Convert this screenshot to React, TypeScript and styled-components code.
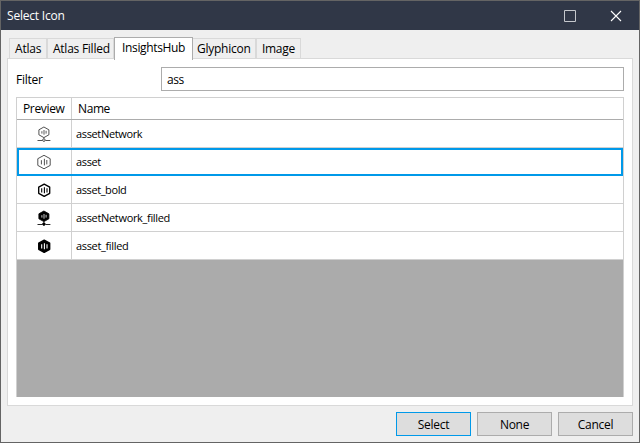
import React from 'react';
import styled, { createGlobalStyle, css } from 'styled-components';

const GlobalStyle = createGlobalStyle`
  * { box-sizing: border-box; }
  body { margin: 0; background: #efefef; }
`;

const Window = styled.div`
  width: 640px;
  height: 443px;
  display: flex;
  flex-direction: column;
  border: 1px solid #646464;
  background: #efefef;
  color: #000;
  font: 12px/16px 'Open Sans', 'Noto Sans', sans-serif;
  overflow: hidden;
`;

const TitleBar = styled.header`
  display: flex;
  flex: none;
  align-items: center;
  justify-content: space-between;
  height: 29px;
  padding-left: 6px;
  background: #303747;
  color: #fff;
`;

const WindowControls = styled.div`
  display: flex;
`;

const WindowButton = styled.button`
  display: flex;
  align-items: center;
  justify-content: center;
  width: 46px;
  height: 29px;
  padding: 0;
  border: 0;
  background: transparent;
  color: #fff;
`;

const Label = styled.span<{ $spacing?: number; $size?: number; $drop?: number }>`
  padding-top: ${({ $drop = 0 }) => $drop}px;
  font-size: ${({ $size = 12 }) => $size}px;
  letter-spacing: ${({ $spacing = 0 }) => $spacing}px;
  white-space: nowrap;
`;

const TabList = styled.nav`
  display: flex;
  flex: none;
  align-items: flex-end;
  height: 29px;
  padding-left: 8px;
`;

const Tab = styled.div<{ $width: number; $active?: boolean; $joined?: boolean }>`
  width: ${({ $width }) => $width}px;
  height: 21px;
  padding: 2px 0 0 5px;
  border: 1px solid #d9d9d9;
  ${({ $joined }) =>
    $joined &&
    css`
      padding-left: 4px;
      border-left: 0;
    `}
  ${({ $active }) =>
    $active &&
    css`
      position: relative;
      height: 23px;
      margin-bottom: -1px;
      padding: 2px 0 0 7px;
      border-color: #acacac;
      border-bottom: 0;
      background: #fff;
    `}
`;

const Panel = styled.main`
  display: flex;
  flex: none;
  flex-direction: column;
  width: 626px;
  height: 348px;
  margin: -1px 0 0 6px;
  padding: 8px;
  border: 1px solid #d9d9d9;
  background: #fff;
`;

const FilterRow = styled.label`
  display: grid;
  grid-template-columns: 145px 463px;
  align-items: center;
  height: 24px;
  margin-bottom: 6px;
`;

const FilterBox = styled.div`
  display: flex;
  align-items: center;
  height: 24px;
  padding-left: 5px;
  border: 1px solid #acacac;
`;

const Table = styled.section`
  width: 608px;
  height: 300px;
  border: 1px solid #d0d0d0;
  border-bottom: 0;
  background: #ababab;
`;

const HeaderRow = styled.div`
  display: grid;
  grid-template-columns: 55px 1fr;
  height: 22px;
  border-bottom: 1px solid #acacac;
  background: #fff;
`;

const HeaderCell = styled.div<{ $first?: boolean }>`
  display: flex;
  align-items: center;
  padding-left: 6px;
  border-right: ${({ $first }) => ($first ? '1px solid #d0d0d0' : '0')};
`;

const Row = styled.div<{ $selected?: boolean }>`
  position: relative;
  display: grid;
  grid-template-columns: 55px 1fr;
  height: 28px;
  border-bottom: 1px solid #d0d0d0;
  background: #fff;
  ${({ $selected }) =>
    $selected &&
    css`
      &::after {
        content: '';
        position: absolute;
        inset: 0 0 -1px;
        border: 2px solid #0099e9;
      }
    `}
`;

const IconCell = styled.div`
  display: flex;
  align-items: center;
  justify-content: center;
  border-right: 1px solid #d0d0d0;
`;

const NameCell = styled.div`
  display: flex;
  align-items: center;
  padding: 1px 0 0 4px;
`;

const Footer = styled.footer`
  display: flex;
  justify-content: flex-end;
  gap: 6px;
  padding: 6px 6px 0 0;
`;

const ActionButton = styled.button<{ $primary?: boolean }>`
  display: flex;
  align-items: center;
  justify-content: center;
  width: 75px;
  height: 24px;
  padding: 1px 0 0;
  border: 1px solid ${({ $primary }) => ($primary ? '#0099e9' : '#acacac')};
  background: #ddd;
  color: #000;
  font: inherit;
`;

type IconKind = 'network' | 'outline' | 'bold' | 'networkFilled' | 'filled';

function AssetIcon({ kind }: { kind: IconKind }) {
  if (kind === 'network' || kind === 'networkFilled') {
    const filled = kind === 'networkFilled';
    const ink = filled ? '#000' : '#333';
    return (
      <svg width="16" height="16" viewBox="0 0 16 16">
        <path
          d="M7.9 1 12.9 3.8V8.8L7.9 11.6 2.9 8.8V3.8Z"
          fill={filled ? '#000' : 'none'}
          stroke={ink}
          strokeWidth=".85"
        />
        <path d="M5.9 5.2v2.4M8 4v4.7M10.1 4.8v2.8" stroke={filled ? '#fff' : ink} strokeWidth=".8" />
        <path d="M7.9 11.6v1M1.5 14.5h4.9M9.5 14.5h4.9" stroke={ink} strokeWidth=".85" />
        <circle cx="7.9" cy="14.1" r="1.3" fill={filled ? '#000' : '#fff'} stroke={ink} strokeWidth=".85" />
      </svg>
    );
  }
  const outline = kind === 'outline';
  const color = outline ? '#333' : '#000';
  return (
    <svg width="16" height="16" viewBox="0 0 16 16">
      <path
        d={outline ? 'M8 1.3 14.2 4.7V11.4L8 14.8 1.8 11.4V4.7Z' : 'M8.2 2.2 13.7 5.2V11.3L8.2 14.4 2.7 11.3V5.2Z'}
        fill={kind === 'filled' ? '#000' : 'none'}
        stroke={color}
        strokeWidth={outline ? 0.85 : 1.35}
        strokeLinejoin="round"
      />
      <path
        d={outline ? 'M5.4 6.2v4.2M8.4 4.8v6.6M10.8 6v4.4' : 'M5.7 6.3v4.3M8.4 5.3v6M11 6.3v4.3'}
        stroke={kind === 'filled' ? '#fff' : color}
        strokeWidth={outline ? 0.85 : 1.1}
      />
    </svg>
  );
}

const tabs = [
  { name: 'Atlas', width: 38, spacing: -0.2 },
  { name: 'Atlas Filled', width: 67, spacing: -0.25 },
  { name: 'InsightsHub', width: 79, spacing: -0.35, active: true },
  { name: 'Glyphicon', width: 63, spacing: -0.25, joined: true },
  { name: 'Image', width: 45, spacing: -0.3 },
];

const assets: { name: string; icon: IconKind; spacing: number; selected?: boolean }[] = [
  { name: 'assetNetwork', icon: 'network', spacing: -0.35 },
  { name: 'asset', icon: 'outline', spacing: -0.35, selected: true },
  { name: 'asset_bold', icon: 'bold', spacing: -0.4 },
  { name: 'assetNetwork_filled', icon: 'networkFilled', spacing: -0.33 },
  { name: 'asset_filled', icon: 'filled', spacing: -0.34 },
];

export default function App() {
  return (
    <>
      <GlobalStyle />
      <Window>
        <TitleBar>
          <Label $spacing={-0.2} $drop={1}>Select Icon</Label>
          <WindowControls>
            <WindowButton aria-label="Maximize">
              <svg width="12" height="12" viewBox="0 0 12 12">
                <path d="M.5.5h11v11H.5Z" fill="none" stroke="#c5c8cd" />
              </svg>
            </WindowButton>
            <WindowButton aria-label="Close">
              <svg width="12" height="12" viewBox="0 0 12 12">
                <path d="m1 1 10 10M11 1 1 11" stroke="#fff" strokeWidth="1.1" />
              </svg>
            </WindowButton>
          </WindowControls>
        </TitleBar>
        <TabList>
          {tabs.map((tab) => (
            <Tab key={tab.name} $width={tab.width} $active={tab.active} $joined={tab.joined}>
              <Label $spacing={tab.spacing}>{tab.name}</Label>
            </Tab>
          ))}
        </TabList>
        <Panel>
          <FilterRow>
            <Label $spacing={-0.25} $drop={2}>Filter</Label>
            <FilterBox>
              <Label $spacing={-0.4} $drop={2}>ass</Label>
            </FilterBox>
          </FilterRow>
          <Table>
            <HeaderRow>
              <HeaderCell $first>
                <Label $spacing={-0.35} $drop={1}>Preview</Label>
              </HeaderCell>
              <HeaderCell>
                <Label $spacing={-0.4} $drop={1}>Name</Label>
              </HeaderCell>
            </HeaderRow>
            {assets.map((asset) => (
              <Row key={asset.name} $selected={asset.selected}>
                <IconCell>
                  <AssetIcon kind={asset.icon} />
                </IconCell>
                <NameCell>
                  <Label $size={11} $spacing={asset.spacing}>{asset.name}</Label>
                </NameCell>
              </Row>
            ))}
          </Table>
        </Panel>
        <Footer>
          <ActionButton $primary>
            <Label $spacing={-0.3}>Select</Label>
          </ActionButton>
          <ActionButton>
            <Label $spacing={-0.3}>None</Label>
          </ActionButton>
          <ActionButton>
            <Label $spacing={-0.3}>Cancel</Label>
          </ActionButton>
        </Footer>
      </Window>
    </>
  );
}
